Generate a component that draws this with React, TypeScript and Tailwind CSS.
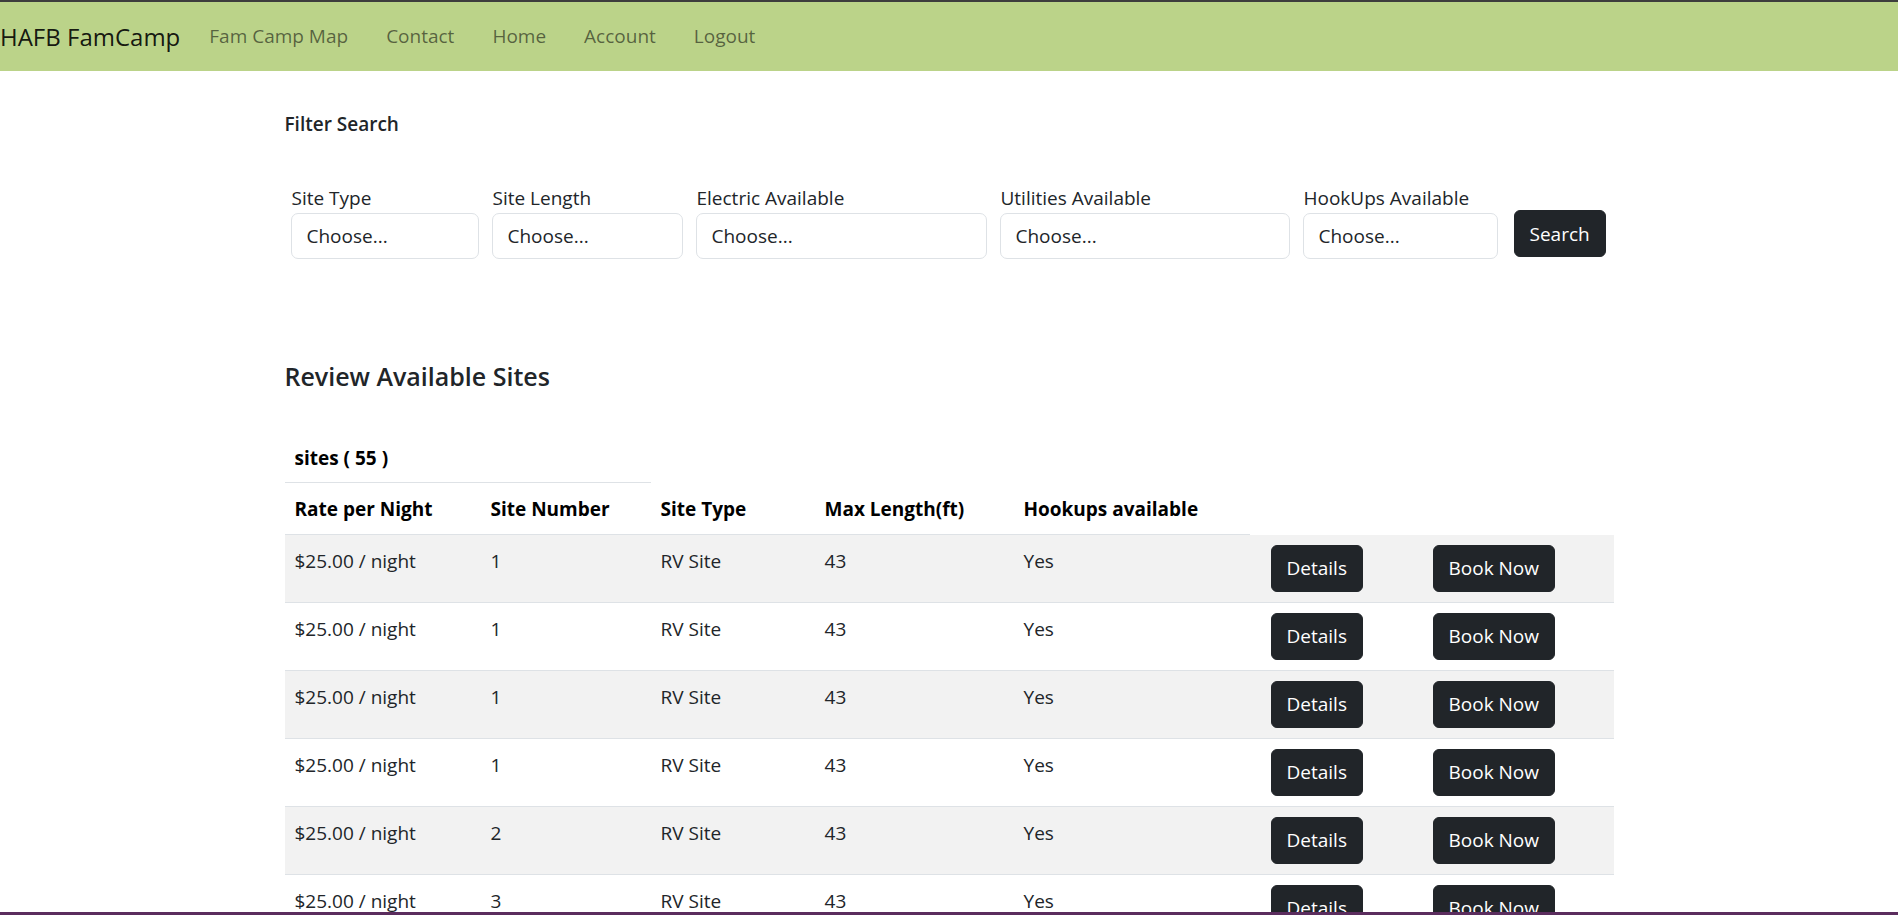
const navLinks = ["Fam Camp Map", "Contact", "Home", "Account", "Logout"];

const filters = [
    { label: "Site Type", width: "w-[188px]" },
    { label: "Site Length", width: "w-[191px]" },
    { label: "Electric Available", width: "w-[291px]" },
    { label: "Utilities Available", width: "w-[290px]" },
    { label: "HookUps Available", width: "w-[195px]" },
];

const sites = [
    { rate: "$25.00 / night", number: "1", type: "RV Site", length: "43", hookups: "Yes" },
    { rate: "$25.00 / night", number: "1", type: "RV Site", length: "43", hookups: "Yes" },
    { rate: "$25.00 / night", number: "1", type: "RV Site", length: "43", hookups: "Yes" },
    { rate: "$25.00 / night", number: "1", type: "RV Site", length: "43", hookups: "Yes" },
    { rate: "$25.00 / night", number: "2", type: "RV Site", length: "43", hookups: "Yes" },
    { rate: "$25.00 / night", number: "3", type: "RV Site", length: "43", hookups: "Yes" },
];

const DarkButton: React.FC<{ children: React.ReactNode; className?: string }> = ({
    children,
    className = "",
}) => (
    <button
        className={`h-[47px] px-[15px] bg-[#212529] text-white text-[19px] leading-[28px] rounded-[6px] border border-[#212529] ${className}`}
    >
        {children}
    </button>
);

export default function App() {
    return (
        <div className="min-h-screen bg-white text-[#212529] font-['Segoe_UI','Open_Sans',sans-serif]">
            {/* navbar */}
            <nav className="h-[71px] bg-[#bbd389] border-t-2 border-[#3d3d3d] flex items-center">
                <a className="text-[24px] text-black/90 pr-[29px]">HAFB FamCamp</a>
                <div className="flex gap-[38px]">
                    {navLinks.map((link) => (
                        <a key={link} className="text-[19px] text-black/55">
                            {link}
                        </a>
                    ))}
                </div>
            </nav>

            <div className="w-[1329px] mx-auto">
                {/* filter */}
                <h6 className="mt-[39px] text-[19px] leading-[29px] font-semibold">Filter Search</h6>
                <div className="mt-[45px] ml-[6px] flex items-end gap-[13px]">
                    {filters.map((f) => (
                        <div key={f.label} className={f.width}>
                            <label className="block text-[19px] leading-[29px] pl-[1px]">{f.label}</label>
                            <div className="h-[46px] border border-[#dee2e6] rounded-[7px] px-[15px] flex items-center text-[19px]">
                                Choose...
                            </div>
                        </div>
                    ))}
                    <DarkButton className="ml-[3px] mb-[2px]">Search</DarkButton>
                </div>

                {/* sites */}
                <h4 className="mt-[102px] text-[25px] leading-[30px] font-semibold">Review Available Sites</h4>

                <table className="mt-[43px] w-full table-fixed border-collapse text-[19px] leading-[29px]">
                    <colgroup>
                        <col className="w-[196px]" />
                        <col className="w-[170px]" />
                        <col className="w-[164px]" />
                        <col className="w-[199px]" />
                        <col className="w-[236px]" />
                        <col className="w-[162px]" />
                        <col />
                    </colgroup>
                    <thead>
                        <tr>
                            <th colSpan={2} className="text-left font-bold text-black px-[10px] pt-[10px] pb-[9px] border-b border-[#dee2e6]">
                                sites ( 55 )
                            </th>
                        </tr>
                        <tr>
                            {["Rate per Night", "Site Number", "Site Type", "Max Length(ft)", "Hookups available"].map((h) => (
                                <th key={h} className="text-left font-bold text-black px-[10px] pt-[12px] pb-[10px] border-b border-[#dee2e6]">
                                    {h}
                                </th>
                            ))}
                        </tr>
                    </thead>
                    <tbody>
                        {sites.map((s, i) => (
                            <tr key={i} className={`border-b border-[#dee2e6] ${i % 2 === 0 ? "bg-[#f2f2f2]" : "bg-white"}`}>
                                <td className="align-top px-[10px] pt-[12px]">{s.rate}</td>
                                <td className="align-top px-[10px] pt-[12px]">{s.number}</td>
                                <td className="align-top px-[10px] pt-[12px]">{s.type}</td>
                                <td className="align-top px-[10px] pt-[12px]">{s.length}</td>
                                <td className="align-top px-[10px] pt-[12px]">{s.hookups}</td>
                                <td className="align-top pl-[21px] py-[10px]">
                                    <DarkButton>Details</DarkButton>
                                </td>
                                <td className="align-top pl-[21px] py-[10px]">
                                    <DarkButton>Book Now</DarkButton>
                                </td>
                            </tr>
                        ))}
                    </tbody>
                </table>
            </div>

            {/* window frame edge */}
            <div className="fixed left-0 right-0 bottom-0 h-[3px] bg-[#5b2d5e]" />
        </div>
    );
}
